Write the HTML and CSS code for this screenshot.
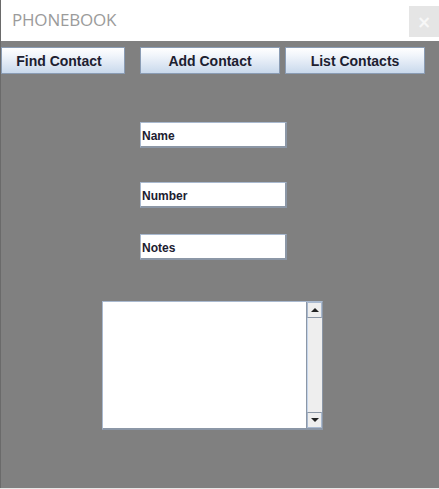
FILE: index.html
```html
<!DOCTYPE html>
<html>
<head>
<meta charset="utf-8">
<link rel="stylesheet" href="styles.css">
</head>
<body>
<div class="window">
  <header class="titlebar">
    <span class="title">PHONEBOOK</span>
    <span class="close">&#215;</span>
  </header>
  <main class="content">
    <nav class="toolbar">
      <button class="btn btn-find">Find Contact</button>
      <button class="btn btn-add">Add Contact</button>
      <button class="btn btn-list">List Contacts</button>
    </nav>
    <div class="fields">
      <div class="field f-name">Name</div>
      <div class="field f-number">Number</div>
      <div class="field f-notes">Notes</div>
    </div>
    <div class="textarea">
      <div class="text"></div>
      <div class="scrollbar">
        <div class="sb-btn"><span class="tri up"></span></div>
        <div class="track"></div>
        <div class="sb-btn"><span class="tri down"></span></div>
      </div>
    </div>
  </main>
</div>
</body>
</html>
```
FILE: styles.css
```css
html, body {
  margin: 0;
  padding: 0;
  background: #e9e9e9;
}
.window {
  width: 439px;
  height: 488px;
  display: flex;
  flex-direction: column;
  background: #808080;
  box-sizing: border-box;
  border-left: 1px solid #6a6a6a;
}
.titlebar {
  height: 41px;
  background: #ffffff;
  display: flex;
  align-items: flex-start;
  justify-content: space-between;
  box-sizing: border-box;
}
.title {
  font-family: "Open Sans", "Noto Sans", sans-serif;
  font-size: 17px;
  color: #9b9b9b;
  margin: 8px 0 0 11px;
  letter-spacing: -0.2px;
}
.close {
  width: 30px;
  height: 31px;
  margin-top: 6px;
  background: #e5e5e5;
  color: #f7f7f7;
  font-family: "DejaVu Sans", sans-serif;
  font-weight: bold;
  font-size: 17px;
  display: flex;
  align-items: center;
  justify-content: center;
}
.content {
  flex: 1;
  display: flex;
  flex-direction: column;
}
.toolbar {
  display: flex;
  margin-top: 6px;
  height: 27px;
}
.btn {
  height: 27px;
  padding: 0;
  box-sizing: border-box;
  border: 1px solid #8a9cb4;
  background: linear-gradient(to bottom, #ffffff 0%, #f1f5fb 30%, #c9d9ec 100%);
  font-family: "Liberation Sans", Arial, sans-serif;
  font-weight: bold;
  font-size: 14px;
  color: #1c2030;
}
.btn-find { width: 124px; margin-left: 0; padding-right: 8px; }
.btn-add { width: 140px; margin-left: 15px; }
.btn-list { width: 140px; margin-left: 5px; }
.fields {
  display: flex;
  flex-direction: column;
  margin-left: 139px;
  margin-top: 48px;
}
.field {
  width: 147px;
  height: 26px;
  box-sizing: border-box;
  background: #ffffff;
  border-top: 1px solid #a9b9cf;
  border-left: 1px solid #a9b9cf;
  border-right: 2px solid #8c97a6;
  border-bottom: 2px solid #8c97a6;
  box-shadow: inset -1px 0 0 #ffffff;
  font-family: "Liberation Sans", Arial, sans-serif;
  font-weight: bold;
  font-size: 12px;
  color: #1c2030;
  padding: 6px 0 0 1px;
}
.f-number { margin-top: 34px; }
.f-notes { margin-top: 26px; }
.textarea {
  display: flex;
  width: 221px;
  height: 129px;
  margin-left: 101px;
  margin-top: 41px;
  box-sizing: border-box;
  background: #ffffff;
  border-top: 1px solid #a9b9cf;
  border-left: 1px solid #a9b9cf;
  border-right: 1px solid #8c97a6;
  border-bottom: 2px solid #8c97a6;
}
.text { flex: 1; }
.scrollbar {
  width: 15px;
  display: flex;
  flex-direction: column;
  background: #eeeeee;
  border-left: 1px solid #8c97a6;
}
.sb-btn {
  height: 16px;
  box-sizing: border-box;
  background: #eeeeee;
  border: 1px solid #a9b9cf;
  display: flex;
  align-items: center;
  justify-content: center;
}
.sb-btn:first-child { border-bottom: 1px solid #8c97a6; }
.sb-btn:last-child { border-top: 1px solid #8c97a6; }
.track {
  flex: 1;
  background: #eeeeee;
  border-left: 1px solid #c4d4ea;
}
.tri {
  width: 0;
  height: 0;
  border-left: 4px solid transparent;
  border-right: 4px solid transparent;
}
.tri.up { border-bottom: 4px solid #222; }
.tri.down { border-top: 4px solid #222; }
```
